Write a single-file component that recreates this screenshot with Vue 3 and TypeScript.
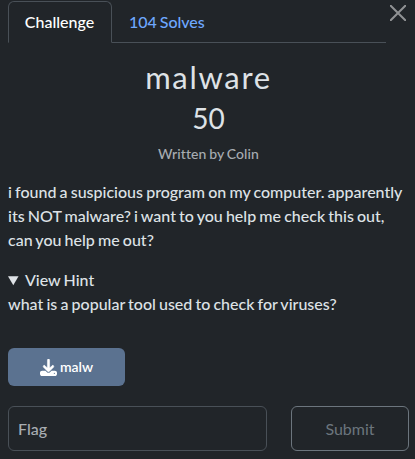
<script setup lang="ts">
import { ref } from 'vue'

const flag = ref('')
const tabs = [
  { id: 'challenge', label: 'Challenge' },
  { id: 'solves', label: '104 Solves' },
]
const active = ref('challenge')
</script>

<template>
  <main class="modal">
    <header class="top">
      <nav class="tabs">
        <button
          v-for="tab in tabs"
          :key="tab.id"
          class="tab"
          :class="{ active: active === tab.id }"
          @click="active = tab.id"
        >{{ tab.label }}</button>
      </nav>
      <button class="close" aria-label="Close">
        <svg width="16" height="16" viewBox="0 0 16 16">
          <path d="M.7.7l14.6 14.6M15.3.7L.7 15.3" fill="none" stroke="currentColor" stroke-width="2" stroke-linecap="round" />
        </svg>
      </button>
    </header>

    <h2 class="name">malware</h2>
    <h3 class="value">50</h3>
    <div class="author">Written by Colin</div>

    <p class="desc">i found a suspicious program on my computer. apparently its NOT malware? i want to you help me check this out, can you help me out?</p>

    <details class="hint" open>
      <summary>View Hint</summary>
      <div>what is a popular tool used to check for viruses?</div>
    </details>

    <button class="file">
      <svg width="17" height="17" viewBox="0 0 512 512" fill="currentColor">
        <path d="M288 32c0-17.700-14.300-32-32-32s-32 14.300-32 32v242.700l-73.400-73.400c-12.500-12.500-32.800-12.500-45.300 0s-12.500 32.800 0 45.300l128 128c12.500 12.500 32.800 12.500 45.300 0l128-128c12.500-12.500 12.500-32.800 0-45.300s-32.800-12.500-45.300 0L288 274.700V32z" stroke="currentColor" stroke-width="16" />
        <path d="M64 352c-35.300 0-64 28.700-64 64v32c0 35.300 28.700 64 64 64h384c35.300 0 64-28.700 64-64v-32c0-35.300-28.700-64-64-64H346.500l-45.300 45.300c-25 25-65.500 25-90.500 0L165.500 352H64zm368 62a18 18 0 1 1 0 36 18 18 0 1 1 0-36z" />
      </svg>
      <span>malw</span>
    </button>

    <form class="answer" @submit.prevent>
      <input v-model="flag" class="flag" type="text" placeholder="Flag" />
      <button class="submit" type="submit">Submit</button>
    </form>
  </main>
</template>

<style>
body {
  background: #212529;
}
</style>

<style scoped>
.modal {
  box-sizing: border-box;
  width: 415px;
  height: 459px;
  padding: 1px 6px 0 8px;
  overflow: hidden;
  background: #212529;
  color: #dee2e6;
  font-family: Lato, "Liberation Sans", sans-serif;
  font-size: 16px;
  font-weight: 500;
  line-height: 24px;
  word-spacing: -0.9px;
}
button,
input {
  box-sizing: border-box;
  margin: 0;
  font: inherit;
  word-spacing: inherit;
}
.top {
  display: flex;
  align-items: flex-start;
}
.tabs {
  display: flex;
  width: 378px;
  height: 42px;
  box-shadow: inset 0 -1px #495057;
}
.tab {
  height: 42px;
  padding: 0 16px;
  border: 1px solid transparent;
  background: none;
  color: #6ea8fe;
  letter-spacing: -0.05px;
  white-space: nowrap;
}
.tab.active {
  width: 104px;
  padding: 0 1px 0 0;
  border-color: #495057;
  border-bottom-color: #212529;
  border-radius: 6px 6px 0 0;
  background: #212529;
  color: #fff;
  letter-spacing: 0;
}
.close {
  display: flex;
  margin: 4px 0 0 4px;
  padding: 0;
  border: 0;
  background: none;
  color: #909294;
}
.name,
.value {
  margin: 0;
  font-weight: 400;
  text-align: center;
}
.name {
  padding-top: 15px;
  font-size: 31px;
  line-height: 38px;
  letter-spacing: 1.700px;
}
.value {
  margin-top: 5px;
  font-size: 28px;
  line-height: 34px;
}
.author {
  margin-top: 8px;
  color: #a7acb1;
  font-size: 14px;
  line-height: 21px;
  letter-spacing: 0.1px;
  text-align: center;
}
.desc {
  margin: 16px 0;
}
.hint summary {
  cursor: pointer;
}
.file {
  display: flex;
  align-items: center;
  justify-content: center;
  gap: 3px;
  width: 117px;
  height: 38px;
  margin-top: 32px;
  padding: 0;
  border: 0;
  border-radius: 6px;
  background: #5b7290;
  color: #fff;
  font-size: 14px;
  font-weight: 600;
}
.answer {
  display: flex;
  gap: 24px;
  margin-top: 20px;
}
.flag {
  width: 259px;
  height: 45px;
  padding: 0 9px;
  border: 1px solid #495057;
  border-radius: 6px;
  background: #212529;
  color: #dee2e6;
}
.flag::placeholder {
  color: #a8adb2;
  opacity: 1;
}
.submit {
  width: 118px;
  height: 45px;
  padding: 0;
  border: 1px solid #6c757d;
  border-radius: 6px;
  background: none;
  color: #6c757d;
  font-weight: 400;
}
</style>
